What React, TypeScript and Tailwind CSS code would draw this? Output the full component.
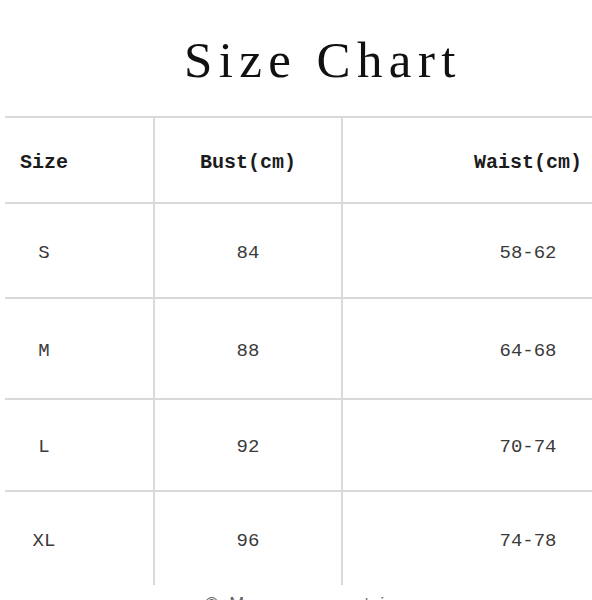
const rows = [
  { size: 'S', bust: '84', waist: '58-62', h: 'h-[95px]' },
  { size: 'M', bust: '88', waist: '64-68', h: 'h-[101px]' },
  { size: 'L', bust: '92', waist: '70-74', h: 'h-[92px]' },
  { size: 'XL', bust: '96', waist: '74-78', h: 'h-[95px]' },
];

export default function App() {
  return (
    <div className="w-[592px] h-[600px] overflow-hidden bg-white">
      {/* title */}
      <div className="h-[116px] pt-[35px] pl-[184px]">
        <h1 className="font-['Liberation_Serif',serif] text-[51px] leading-none tracking-[6.4px] text-[#111] whitespace-nowrap">
          Size Chart
        </h1>
      </div>

      <div className="ml-[5px] w-[708px] font-['Liberation_Mono',monospace]">
        <div className="flex h-[86px] border-t-2 border-[#d9d9d9] text-[20px] font-bold text-[#1c1c1c]">
          <div className="w-[150px] shrink-0 border-r-2 border-[#d9d9d9] flex items-center pt-[5px]">
            <div className="w-[78px] text-center">Size</div>
          </div>
          <div className="w-[188px] shrink-0 border-r-2 border-[#d9d9d9] flex items-center justify-center pt-[5px]">
            Bust(cm)
          </div>
          <div className="flex-1 flex items-center pt-[5px]">
            <div className="w-[370px] text-center">Waist(cm)</div>
          </div>
        </div>

        {rows.map((r) => (
          <div key={r.size} className={`flex ${r.h} border-t-2 border-[#d9d9d9] text-[19px] text-[#3a3a3a]`}>
            <div className="w-[150px] shrink-0 border-r-2 border-[#d9d9d9] flex items-center pt-[5px]">
              <div className="w-[78px] text-center">{r.size}</div>
            </div>
            <div className="w-[188px] shrink-0 border-r-2 border-[#d9d9d9] flex items-center justify-center pt-[5px]">
              {r.bust}
            </div>
            <div className="flex-1 flex items-center pt-[5px]">
              <div className="w-[370px] text-center">{r.waist}</div>
            </div>
          </div>
        ))}
      </div>

      <p className="mt-[10px] pl-[205px] font-['Liberation_Sans',sans-serif] text-[18px] leading-none tracking-[3px] text-[#666] whitespace-nowrap">
        © Measurement in cm
      </p>
    </div>
  );
}
